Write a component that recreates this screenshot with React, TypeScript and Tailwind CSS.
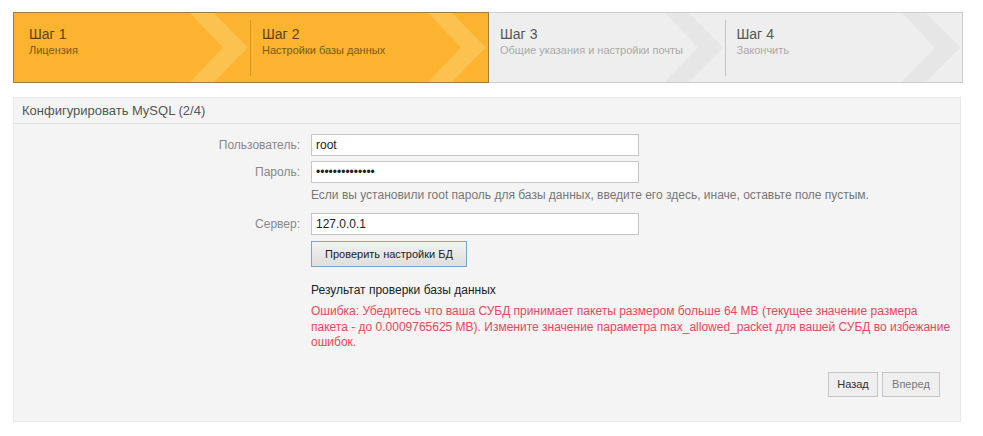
import React from 'react';

type Step = { n: number; title: string; done: boolean; last: boolean; first: boolean };

const steps: Step[] = [
  { n: 1, title: 'Лицензия', done: true, last: false, first: true },
  { n: 2, title: 'Настройки базы данных', done: true, last: true, first: false },
  { n: 3, title: 'Общие указания и настройки почты', done: false, last: false, first: false },
  { n: 4, title: 'Закончить', done: false, last: true, first: false },
];

const Chevron = ({ color }: { color: string }) => (
  <svg className="absolute right-0 top-0 h-full w-[64px]" viewBox="0 0 64 70" preserveAspectRatio="none">
    <polygon points="4,0 28,0 62,35 28,70 4,70 37,35" fill={color} />
  </svg>
);

const StepItem = ({ step }: { step: Step }) => (
  <div className="flex flex-1 items-stretch">
    <div className={`relative flex-1 pt-[13px] ${step.first ? 'pl-[15px]' : 'pl-[11px]'}`}>
      <Chevron color={step.done ? '#fcc24f' : '#e6e6e6'} />
      <div className="relative">
        <div className={`text-[14px] leading-[17px] ${step.done ? 'text-[#5a4416]' : 'text-[#555]'}`}>Шаг {step.n}</div>
        <div className={`text-[11px] leading-[15px] ${step.done ? 'text-[#7d5a16]' : 'text-[#aaa]'}`}>{step.title}</div>
      </div>
    </div>
    {!step.last && <div className={`w-px self-center h-[56px] ${step.done ? 'bg-[#d09a2a]' : 'bg-[#c4c4c4]'}`} />}
  </div>
);

const Field = ({ label, value, type = 'text' }: { label: string; value: string; type?: string }) => (
  <div className="flex items-center">
    <div className="w-[297px] text-right text-[12px] text-[#888] pr-[11px]">{label}</div>
    <input
      type={type}
      defaultValue={value}
      className="w-[328px] h-[22px] border border-[#c6c6c6] bg-white px-[4px] text-[12px] text-[#222] outline-none"
    />
  </div>
);

export default function App() {
  return (
    <div className="w-[983px] h-[436px] bg-white pt-[12px] pl-[13px] font-['Liberation_Sans',Arial,sans-serif]">
      <div className="flex w-[950px] h-[71px]">
        <div className="flex w-[476px] border border-[#a17c3e] bg-[#fbb330]">
          <StepItem step={steps[0]} />
          <StepItem step={steps[1]} />
        </div>
        <div className="flex flex-1 border border-l-0 border-[#cccccc] bg-[#eeeeee]">
          <StepItem step={steps[2]} />
          <StepItem step={steps[3]} />
        </div>
      </div>

      <div className="mt-[14px] w-[948px] h-[325px] bg-[#f4f4f4] border border-[#e9e9e9]">
        <div className="h-[26px] border-b border-[#dddddd] pl-[8px] flex items-center text-[13px] text-[#555]">
          Конфигурировать MySQL (2/4)
        </div>

        <div className="pt-[10px] flex flex-col">
          <Field label="Пользователь:" value="root" />
          <div className="mt-[5px]">
            <Field label="Пароль:" value="12345678901234" type="password" />
          </div>
          <div className="ml-[297px] mt-[5px] text-[12px] leading-[15px] text-[#777]">
            Если вы установили root пароль для базы данных, введите его здесь, иначе, оставьте поле пустым.
          </div>
          <div className="mt-[10px]">
            <Field label="Сервер:" value="127.0.0.1" />
          </div>
          <div className="ml-[297px] mt-[6px]">
            <button className="w-[156px] h-[26px] border border-[#7da2ce] bg-gradient-to-b from-[#f2f2f2] to-[#dedede] text-[11px] text-[#222]">
              Проверить настройки БД
            </button>
          </div>

          <div className="ml-[297px] mt-[16px] text-[12px] leading-[15px] text-[#222]">
            Результат проверки базы данных
          </div>
          <div className="ml-[297px] mt-[6px] w-[645px] text-[12px] leading-[15.5px] text-[#e8475b]">
            Ошибка: Убедитесь что ваша СУБД принимает пакеты размером больше 64 MB (текущее значение размера пакета - до 0.0009765625 MB). Измените значение параметра max_allowed_packet для вашей СУБД во избежание ошибок.
          </div>

          <div className="mt-[21px] flex justify-end gap-[4px] pr-[20px]">
            <button className="w-[50px] h-[25px] border border-[#c4c4c4] bg-[#efefef] text-[11px] text-[#333]">Назад</button>
            <button className="w-[58px] h-[25px] border border-[#c4c4c4] bg-[#efefef] text-[11px] text-[#777]">Вперед</button>
          </div>
        </div>
      </div>
    </div>
  );
}
